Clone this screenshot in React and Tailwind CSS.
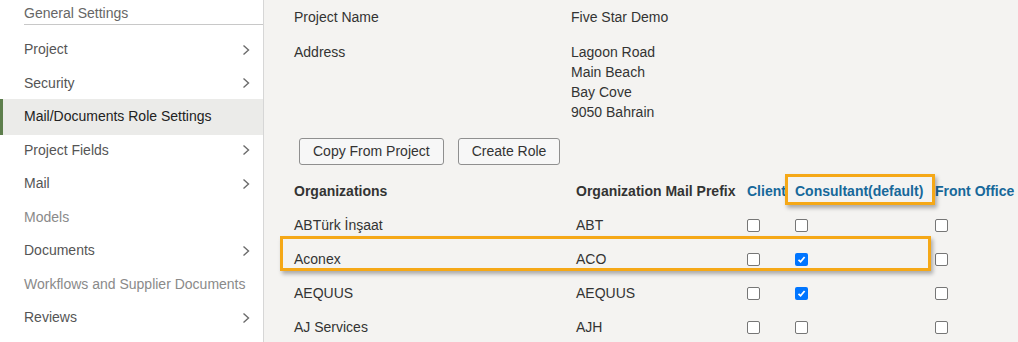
import React from "react";

const Chevron = () => (
  <svg width="8" height="12" viewBox="0 0 8 12" className="shrink-0">
    <polyline points="1.5,1.5 6.5,6 1.5,10.5" fill="none" stroke="#6b6b6b" strokeWidth="1.4" />
  </svg>
);

const Box = ({ checked }) =>
  checked ? (
    <span className="inline-flex w-[13px] h-[13px] rounded-[2px] bg-[#0075ff] items-center justify-center">
      <svg width="9" height="9" viewBox="0 0 9 9">
        <polyline points="1.5,4.8 3.6,6.8 7.6,2" fill="none" stroke="#fff" strokeWidth="1.8" />
      </svg>
    </span>
  ) : (
    <span className="inline-block w-[13px] h-[13px] rounded-[2px] border border-[#767676] bg-white" />
  );

const navItems = [
  { label: "Project", chevron: true },
  { label: "Security", chevron: true },
  { label: "Mail/Documents Role Settings", active: true },
  { label: "Project Fields", chevron: true },
  { label: "Mail", chevron: true },
  { label: "Models", muted: true },
  { label: "Documents", chevron: true },
  { label: "Workflows and Supplier Documents", muted: true },
  { label: "Reviews", chevron: true },
];

const rows = [
  { org: "ABTürk İnşaat", prefix: "ABT", c: [false, false, false] },
  { org: "Aconex", prefix: "ACO", c: [false, true, false] },
  { org: "AEQUUS", prefix: "AEQUUS", c: [false, true, false] },
  { org: "AJ Services", prefix: "AJH", c: [false, false, false] },
];

export default function App() {
  return (
    <div
      className="relative w-[1018px] h-[342px] overflow-hidden flex bg-[#f4f3f1] text-[14px] text-[#333]"
      style={{ fontFamily: '"Liberation Sans", Arial, sans-serif' }}
    >
      {/* Sidebar */}
      <div className="w-[264px] shrink-0 bg-white border-r border-[#d6d6d6] flex flex-col">
        <div className="ml-[24px] h-[25px] pt-[4px] border-b border-[#c8c8c8] text-[#666] leading-[18px]">
          General Settings
        </div>
        <div className="h-[8px]" />
        {navItems.map((it) => (
          <div
            key={it.label}
            className={
              "relative flex items-center justify-between pl-[24px] pr-[13px] " +
              (it.active ? "h-[36px] -my-[1.25px] bg-[#ebebe9] text-[#222]" : "h-[33.5px] ") +
              (it.muted ? "text-[#8a8a8a]" : it.active ? "" : "text-[#555]")
            }
          >
            {it.active && <span className="absolute left-0 top-0 bottom-0 w-[3px] bg-[#5d7e4c]" />}
            <span>{it.label}</span>
            {it.chevron && <Chevron />}
          </div>
        ))}
      </div>

      {/* Main */}
      <div className="flex-1 pl-[30px] pt-[7px] flex flex-col">
        <div className="flex leading-[20px]">
          <div className="w-[277px]">Project Name</div>
          <div>Five Star Demo</div>
        </div>
        <div className="flex leading-[20px] mt-[15px]">
          <div className="w-[277px]">Address</div>
          <div className="flex flex-col">
            <span>Lagoon Road</span>
            <span>Main Beach</span>
            <span>Bay Cove</span>
            <span>9050 Bahrain</span>
          </div>
        </div>
        <div className="flex gap-[14px] ml-[5px] mt-[16px]">
          <button className="h-[27px] px-[13px] border border-[#8f8f8f] rounded-[3px] bg-[#f7f7f7] text-[#333]">
            Copy From Project
          </button>
          <button className="h-[27px] px-[13px] border border-[#8f8f8f] rounded-[3px] bg-[#f7f7f7] text-[#333]">
            Create Role
          </button>
        </div>
        <div className="mt-[9px] grid grid-cols-[282px_171px_48px_140px_1fr] auto-rows-[34px] items-center whitespace-nowrap">
          <div className="font-bold">Organizations</div>
          <div className="font-bold">Organization Mail Prefix</div>
          <div className="font-bold text-[#17689a]">Client</div>
          <div className="font-bold text-[#17689a]">Consultant(default)</div>
          <div className="font-bold text-[#17689a]">Front Office</div>
          {rows.map((r) => (
            <React.Fragment key={r.org}>
              <div>{r.org}</div>
              <div>{r.prefix}</div>
              <div className="flex"><Box checked={r.c[0]} /></div>
              <div className="flex"><Box checked={r.c[1]} /></div>
              <div className="flex"><Box checked={r.c[2]} /></div>
            </React.Fragment>
          ))}
        </div>
      </div>

      {/* Highlight overlays */}
      <div className="absolute left-[785px] top-[174px] w-[150px] h-[31px] border-[3px] border-[#f5a817] shadow-[2px_3px_4px_rgba(0,0,0,0.3)] pointer-events-none" />
      <div className="absolute left-[280px] top-[236px] w-[651px] h-[35px] border-[3px] border-[#f5a817] shadow-[2px_3px_4px_rgba(0,0,0,0.3)] pointer-events-none" />
    </div>
  );
}
